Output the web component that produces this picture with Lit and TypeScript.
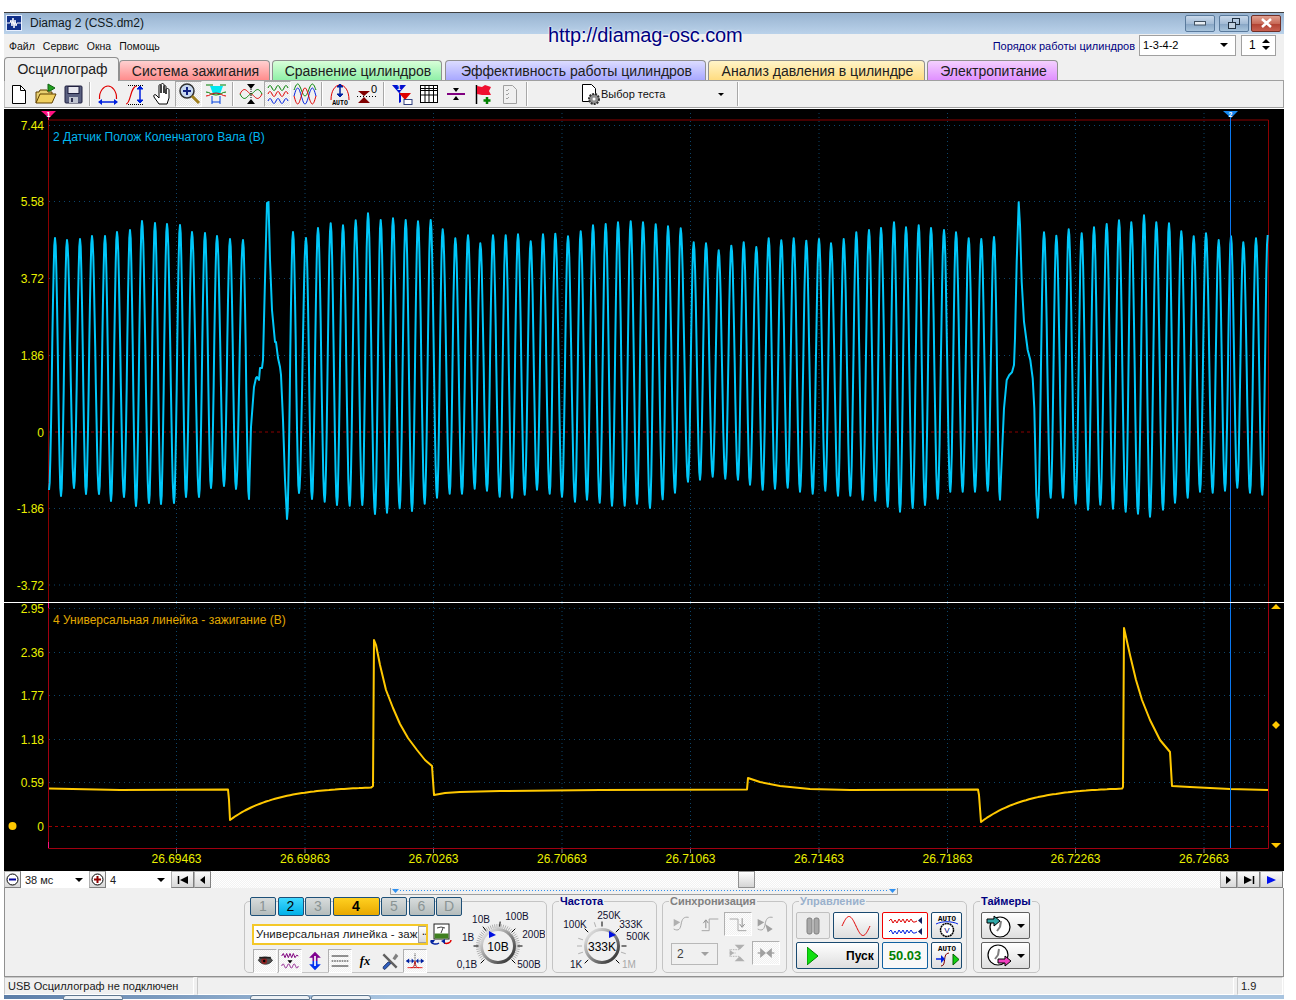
import { LitElement, html, css, svg } from "lit";
import { customElement } from "lit/decorators.js";

type P = [number, number];
const zip = (a: number[], b: number[]) => a.map((v, i) => [v, b[i]] as P);
const conv = (pts: P[], ox: number, oy: number) => pts.map(([x, y]) => [x / 3 + ox, y / 3 + oy] as P);
const alt = (t: P[], c: P[]) => { const o: P[] = []; for (let i = 0; i < Math.max(t.length, c.length); i++) { if (t[i]) o.push(t[i]); if (c[i]) o.push(c[i]); } return o; };

function smooth(pts: P[]): P[] {
  const out: P[] = [];
  for (let i = 0; i < pts.length - 1; i++) {
    const [x0, y0] = pts[i], [x1, y1] = pts[i + 1];
    const n = Math.max(2, Math.round((x1 - x0) * 1.5));
    for (let k = 0; k < n; k++) { const t = k / n; out.push([x0 + (x1 - x0) * t, y0 + (y1 - y0) * (1 - Math.cos(Math.PI * t)) / 2]); }
  }
  out.push(pts[pts.length - 1]);
  return out;
}

const partA: P[] = [[49,490],[55,238],[61,496],[67,240],[74,488],[80,239],[86,494],[92,236],[99,494],[105,236],[111,501],[117,232],[124,497],[130,230],[136,506],[142,221],[149,503],[155,223],[161,504],[167,224],[174,503],[180,225],[186,497],[192,232],[199,497],[205,233],[211,488],[217,236],[224,486],[230,239],[236,489],[243,240],[249,499]];
const spike1: P[] = [[251,427],[254,387],[256,378],[257,377],[259,380],[260,368],[262,368],[263,360],[264,320],[266,240],[267,203],[268.5,202],[270,260],[272,310],[275,342],[276,342],[278,358],[280,367],[281,375],[283,420],[285,480],[287,519]];
const partB: P[] = [[287,519],[293,232],[299,493],[306,238],[312,499],[318,228]];
const partC = conv(alt(
  zip([14,51,89,127,165,201,239,276,314,351,389,426,464,501,539,576,614,651,689,726,765,801,839,876,914,951,990,1028,1065,1104,1140,1178,1216,1254,1290,1328,1365,1403,1440],[920,930,932,930,957,953,940,948,926,908,896,896,881,887,905,908,899,884,896,905,920,914,923,932,932,926,939,913,893,860,854,845,851,854,869,884,881,878,890]),
  zip([32,69,107,144,182,219,257,294,332,368,406,444,481,519,557,594,632,669,706,744,782,819,857,894,932,969,1007,1044,1082,1121,1158,1196,1234,1271,1309,1346,1384,1421],[85,91,76,55,75,70,75,79,75,103,130,121,145,121,121,118,139,118,116,124,109,91,87,82,79,82,88,94,100,142,145,166,152,142,156,130,136,130])), 320, 195);
const partD = conv(alt(
  zip([19,57,93,131,169,207,243,282,318,356,393,432,468,506,544,582],[137,132,145,132,112,105,99,82,97,91,99,105,112,130,132,126]),
  zip([38,76,114,151,188,226,263,300,338,375,413,451,488,525,563,600],[896,887,902,902,914,917,935,950,939,930,911,890,890,890,887,914])), 800, 195);
const spike2 = conv([[612,640],[620,555],[628,540],[636,532],[642,510],[645,430],[650,200],[656,22],[660,90],[665,260],[672,380],[683,465],[691,495],[698,550],[703,640],[709,900],[713,968]], 800, 195);
const partE = conv(alt(
  zip([713,752,789,827,864,901,939,977,1014,1050,1089,1125,1163,1200,1238,1275,1312,1350,1387],[968,908,908,926,944,929,941,950,956,965,944,923,908,890,893,887,878,893,899]),
  zip([732,769,806,845,882,920,957,994,1032,1069,1107,1144,1181,1218,1256,1293,1330,1368,1403],[112,122,103,115,97,87,76,82,61,82,85,109,124,115,135,124,142,130,120])), 800, 195);

const toStr = (p: P[]) => p.map(([x, y]) => `${x.toFixed(1)},${y.toFixed(1)}`).join(" ");
const topTrace = toStr([...smooth(partA), ...spike1, ...smooth([...partB, ...partC, ...partD]), ...spike2, ...smooth(partE)]);

const decay = (x0: number, x1: number, yBase: number, yStart: number, k: number) => { const o: P[] = []; for (let x = x0; x <= x1; x += 3) o.push([x, yBase + (yStart - yBase) * Math.exp(-(x - x0) / k)]); return o; };
const botTrace = toStr([[49,788.5],[120,790],[228,789.5],[229,800],[230,820],...decay(230,372,786,820,46),[373,786],[374,640],[376,645],[380,665],[386,690],[393,708],[400,724],[408,738],[417,750],[425,760],[432,766],[434,795],[445,793],[460,792],[500,791],[600,790],[747,789.5],[748,778],[760,782],[780,786],[810,789],[850,790],[978,789.5],[979,795],[981,822],...decay(981,1122,787,822,46),[1123,787],[1124,628],[1130,655],[1136,680],[1142,700],[1150,720],[1160,740],[1170,752],[1172,786],[1190,787],[1230,789],[1268,790]]);

const vgrid = [176.5, 305, 433.5, 562, 690.5, 819, 947.5, 1075.5, 1204];
const timeLabels = ["26.69463","26.69863","26.70263","26.70663","26.71063","26.71463","26.71863","26.72263","26.72663"];
const topLevels: [string, number][] = [["7.44",125.5],["5.58",201.5],["3.72",278.5],["1.86",355.5],["-1.86",508.5],["-3.72",585]];
const botLevels: [string, number][] = [["2.95",608.5],["2.36",652.5],["1.77",695.5],["1.18",739.5],["0.59",782.5]];

const I = (inner: unknown, w = 24, h = 24) => html`<svg width=${w} height=${h} viewBox="0 0 24 24">${inner}</svg>`;
const R = "#e00000", B = "#0020e0", G = "#008000";
const sine = (x: number, y: number, w: number, a: number, n: number, c: string) => svg`<path d=${(() => { let d = `M${x} ${y}`; for (let i = 1; i <= 40; i++) d += `L${(x + w * i / 40).toFixed(1)} ${(y - a * Math.sin(i / 40 * n * Math.PI * 2)).toFixed(1)}`; return d; })()} fill="none" stroke=${c}/>`;
const arrowV = (x: number, y0: number, y1: number, c: string) => svg`<path d="M${x} ${y0}V${y1}" stroke=${c} stroke-width="1.5"/><path d="M${x - 3} ${y0 + 3}L${x} ${y0}l3 3zM${x - 3} ${y1 - 3}L${x} ${y1}l3 -3z" fill=${c} stroke=${c}/>`;

const icons = {
  newDoc: I(svg`<path d="M5.500 3.500h8l5 5v13h-13z" fill="#fff" stroke="#000"/><path d="M13.500 3.500v5h5" fill="none" stroke="#000"/>`),
  open: I(svg`<path d="M2 21V10h3l1-2h7l1 2h4v3" fill="#e8d070" stroke="#604000"/><path d="M2 21l4-9h16l-4 9z" fill="#f0d060" stroke="#604000"/><path d="M14 9V2l7 4-5 3z" fill="#20a020" stroke="#106010"/>`),
  save: I(svg`<rect x="4" y="4" width="17" height="17" rx="1" fill="#5a6080" stroke="#202040"/><rect x="7" y="4.500" width="11" height="7" fill="#e8e8f0" stroke="#202040"/><rect x="8" y="15" width="9" height="6" fill="#c0c4d0"/><rect x="10" y="16" width="2" height="4" fill="#303050"/>`),
  arch: I(svg`<path d="M3.500 17C3 9 8 4 12 4s9 5 8.500 13" fill="none" stroke=${R} stroke-width="1.200"/><path d="M3 20h18" stroke=${B} stroke-width="1.500"/><path d="M6 17l-4 3 4 3zM18 17l4 3-4 3z" fill=${B}/>`),
  scurve: I(svg`<path d="M3 22c5 0 4-18 11-18" fill="none" stroke=${R} stroke-width="1.200"/><path d="M5 3.500h15" stroke="#000" stroke-dasharray="1 1"/><path d="M5 22.500h15" stroke="#000" stroke-dasharray="1 1"/>${arrowV(17, 4, 21, B)}`),
  hand: I(svg`<path d="M9 22l-5-7c-1-2 1-3 2-2l3 3V4c0-2 2-2 2 0v7V3c0-2 3-2 3 0v8-6c0-2 2-2 2 0v7-4c0-2 3-2 3 0v8l-2 6z" fill="#fff" stroke="#000"/>`),
  zoom: I(svg`<circle cx="10" cy="9" r="7" fill="#c8d8f0" stroke="#303030" stroke-width="1.500"/><path d="M6 9h8M10 5v8" stroke="#102080" stroke-width="2"/><path d="M15 14l7 7" stroke="#a08020" stroke-width="3"/>`),
  hzoom: I(svg`<path d="M6 4h13l-3 8H9z" fill="#00e8f0"/><path d="M2 3h7M16 3h6M2 10c4 0 5 3 10 3s6-3 10-3" fill="none" stroke="#008000"/><path d="M2 14c4 0 5-3 10-3s6 3 10 3" fill="none" stroke=${R}/><path d="M8 14v8M16 14v8M8 20h8" stroke="#0040e0"/>`),
  cross: I(svg`<path d="M1 12c5-10 8 0 11 0s6 10 11 0" fill="none" stroke=${R}/><path d="M1 12c5 10 8 0 11 0s6-10 11 0" fill="none" stroke=${G}/><path d="M8 2h8l-4 5zM8 22h8l-4-5z" fill="#000"/><path d="M12 7v10" stroke="#000" stroke-dasharray="1 1"/>`),
  waves: I(svg`${sine(2,6,20,2.500,2.500,"#008000")}${sine(2,12,20,2.500,2.500,"#e00000")}${sine(2,19,20,2.500,2.500,"#0020e0")}`),
  overlap: I(svg`${sine(1,8,22,6,1.500,"#008000")}${sine(1,14,22,8,1.500,"#0020e0")}${sine(1,14,22,-8,1.500,"#e00000")}`),
  autoArch: I(svg`<path d="M3 18C3 9 7 3 12 3s9 6 9 15" fill="none" stroke=${R}/>${arrowV(12,2,15,"#0020a0")}<text x="12" y="23" text-anchor="middle" font-size="6.500" font-weight="700" font-family="Liberation Mono" fill="#000">AUTO</text>`),
  zeroIcon: I(svg`<path d="M3 9h12l-6 5zM3 21h12l-6-6z" fill="#800000"/><path d="M2 14.500h20" stroke="#000" stroke-dasharray="1 2"/><text x="19" y="11" text-anchor="middle" font-size="11" font-family="Liberation Sans" fill="#000">0</text>`),
  filter: I(svg`<path d="M2 3h14l-7 8z" fill="#0010d0"/><path d="M9 10v11l2-1v-9" fill="#0010d0"/><path d="M9 11h12l-6 7z" fill=${R}/><rect x="14" y="17.500" width="8" height="5" fill="#fff" stroke="#304080"/><text x="9" y="7.500" text-anchor="middle" font-size="7" font-weight="700" font-family="Liberation Sans" fill="#fff">1</text>`),
  table: I(svg`<rect x="3.500" y="3.500" width="17" height="17" fill="#fff" stroke="#000"/><path d="M3 6.500h18M3 8.500h18M3 13h18M8 4v16M12 4v16M16.500 4v16" stroke="#000" fill="none"/>`),
  divide: I(svg`<path d="M3 12h18" stroke="#800080" stroke-width="2"/><path d="M9 6h6l-3 4zM9 18h6l-3-4z" fill="#000"/>`),
  flag: I(svg`<path d="M5.500 3v19" stroke="#000" stroke-width="1.500"/><path d="M6 4l5 1 3-2 6 2-2 4 2 4H11l-5-1z" fill="#f01030"/><path d="M16 15v7M12.500 18.500h7" stroke="#008000" stroke-width="2.500"/>`),
  check: I(svg`<path d="M5.500 3.500h9l4 4v14h-13z" fill="#f0f0f0" stroke="#a0a0a0"/><path d="M8 8l1 1 2-2M8 12l1 1 2-2M8 16l1 1 2-2" stroke="#a0a0a0" fill="none"/>`),
  gearDoc: I(svg`<path d="M4.500 2.500h9l4 4v13h-13z" fill="#fff" stroke="#000"/><circle cx="16" cy="17" r="5" fill="#909090" stroke="#303030" stroke-dasharray="2 1" stroke-width="2"/><circle cx="16" cy="17" r="1.500" fill="#fff"/>`),
  eye: I(svg`<path d="M4 11c3-5 13-5 17 0-3 6-13 7-17 0z" fill="#505050" stroke="#303030"/><circle cx="11" cy="12" r="3.500" fill="#902020"/><circle cx="11" cy="12" r="1.500" fill="#000"/><path d="M5 8l14 0" stroke="#202020" stroke-width="2"/>`),
  purple: I(svg`<path d="M2 6l2-3 2 5 2-5 2 5 2-5 2 5 2-5 2 5 2-3 2 1" fill="none" stroke="#800080" stroke-width="1.200"/>${sine(2,18,20,2.500,3,"#800080")}<path d="M9 11h6l-3 4z" fill="#000"/>`),
  updown: I(svg`<path d="M12 1l7 7h-4v4H9V8H5z" fill="#800090"/><path d="M12 23l7-7h-4v-4H9v4H5z" fill="#0030f0"/><path d="M11 6h2v12h-2z" fill="#fff"/>`),
  lines: I(svg`<path d="M2 6h20M2 18h20" stroke="#000"/><path d="M2 12h20" stroke="#000" stroke-dasharray="2 1"/>`),
  tools: I(svg`<path d="M5 3l16 16-2 2L3 5z" fill="#606060"/><path d="M19 3l-4 6 3 2 4-5z" fill="#808080"/><path d="M10 13l-6 6c-1 3 2 4 3 2l6-6z" fill="#3060c0" stroke="#102050"/>`),
  peak: I(svg`<path d="M3 20h18" stroke=${R}/><path d="M7 20c3 0 4-1 5-8 1 7 2 8 5 8" fill="none" stroke=${R}/><path d="M12 3v17" stroke="#000" stroke-dasharray="1 1"/><path d="M2 12h7M15 12h7" stroke="#0020a0"/><path d="M5 9l-4 3 4 3zM19 9l4 3-4 3zM8 9l3 3-3 3zM16 9l-3 3 3 3z" fill="#0020a0"/>`),
  meter: I(svg`<rect x="5" y="2" width="15" height="15" fill="#fff" stroke="#202020"/><rect x="5.500" y="11.500" width="14" height="5" fill="#408020"/><path d="M8 6l4-1 4 1M12 11l2-5" stroke="#404040" fill="none"/><path d="M2 19c0 3 5 4 8 2" fill="none" stroke="#0020a0" stroke-width="1.500"/><path d="M22 18c0 3-4 4-7 3" fill="none" stroke="#e00000" stroke-width="1.500"/><path d="M1 18h5l-2 3zM12 19l4-2v5z" fill="#0020a0"/>`),
};
const grey = (inner: unknown) => I(svg`<g fill="none" stroke="#a8a8a8" stroke-width="1.200">${inner}</g>`);
const syncIcons = {
  a: grey(svg`<path d="M2 18c6 3 8 0 9-6s3-9 9-8"/><path d="M2 6l8 4-8 5z" fill="#b0b0b0" stroke="none"/>`),
  b: grey(svg`<path d="M2 20h9V6h11"/><path d="M7 17V8M4 11l3-4 3 4" stroke="#909090"/>`),
  c: grey(svg`<path d="M2 6h10v14h10"/><path d="M17 5v10M14 12l3 4 3-4" stroke="#909090"/>`),
  d: grey(svg`<path d="M2 18c6 3 8 0 9-6s3-9 9-8"/><path d="M2 6l8 4-8 5zM11 12l9 6-6 4z" fill="#a0a0a0" stroke="none"/>`),
  e: grey(svg`<path d="M2 8h12M2 12h8M2 16h12" stroke-dasharray="1 1"/><path d="M8 2h12l-6 6zM8 22h12l-6-6zM2 8l5 4-5 4z" fill="#b0b0b0" stroke="none"/>`),
  f: grey(svg`<path d="M2 12h8M14 12h8" stroke-width="2"/><path d="M5 6l7 6-7 6zM19 6l-7 6 7 6z" fill="#a0a0a0" stroke="none"/>`),
};

function knob(cx: number, cy: number, hatch: boolean, majors: number[], center: string, labels: [string, number, number, string?][], mark: P) {
  const r = 16.5;
  const ticks: unknown[] = [];
  if (hatch) for (let a = -135; a <= 135; a += 6) {
    const t = (a - 90) * Math.PI / 180;
    ticks.push(svg`<line x1=${cx + (r + 1.5) * Math.cos(t)} y1=${cy + (r + 1.5) * Math.sin(t)} x2=${cx + (r + 5.5) * Math.cos(t)} y2=${cy + (r + 5.5) * Math.sin(t)} stroke="#b0b0b0"/>`);
  }
  majors.forEach((m) => {
    const a = typeof m === "number" ? m : 0;
    const t = (a - 90) * Math.PI / 180;
    ticks.push(svg`<line x1=${cx + (r + 3) * Math.cos(t)} y1=${cy + (r + 3) * Math.sin(t)} x2=${cx + (r + 8) * Math.cos(t)} y2=${cy + (r + 8) * Math.sin(t)} stroke="#000"/>`);
  });
  return svg`${ticks}
    <circle cx=${cx} cy=${cy} r=${r} fill="#f0f0f0" stroke="url(#kg)" stroke-width="3"/>
    <text x=${cx} y=${cy + 4.500} text-anchor="middle" font-size="12" font-family="Liberation Sans" fill="#000">${center}</text>
    <path d="M${mark[0] - 3} ${mark[1] - 4}l7 4-7 3z" fill="#0010e0"/>
    ${labels.map(([t, x, y, c]) => svg`<text x=${x} y=${y + 3.500} text-anchor="middle" font-size="10" font-family="Liberation Sans" fill=${c || "#101030"}>${t}</text>`)}`;
}
const kgDefs = svg`<defs><linearGradient id="kg" x1="0" y1="0" x2="1" y2="1"><stop offset="0" stop-color="#f4f4f4"/><stop offset=".5" stop-color="#909090"/><stop offset="1" stop-color="#202020"/></linearGradient></defs>`;

const tabs = [
  { t: "Осциллограф", w: 115, c: "on" },
  { t: "Система зажигания", w: 151, c: "red" },
  { t: "Сравнение цилиндров", w: 170, c: "green" },
  { t: "Эффективность работы цилиндров", w: 261, c: "blue" },
  { t: "Анализ давления в цилиндре", w: 217, c: "yellow" },
  { t: "Электропитание", w: 131, c: "pink" },
];
const channels = [
  { t: "1", c: "" }, { t: "2", c: "cyan" }, { t: "3", c: "" }, { t: "4", c: "amber" }, { t: "5", c: "" }, { t: "6", c: "" }, { t: "D", c: "" },
];

@customElement("app-root")
export class AppRoot extends LitElement {
  static styles = css`
    :host { display: block; width: 1296px; height: 1000px; background: #fff; overflow: hidden; font-family: "Liberation Sans", Arial, sans-serif; font-size: 11px; color: #000; }
    svg { display: block; flex: none; }
    .win { position: relative; margin: 12px 12px 0 4px; width: 1280px; border-top: 1px solid #404040; background: #f0f0f0; }
    .title { height: 21px; background: linear-gradient(#98b3d0, #bad2ea); display: flex; align-items: center; padding: 0 2px 1px 2px; box-sizing: border-box; }
    .logo { width: 16px; height: 16px; margin-right: 8px; }
    .ttext { font-size: 12px; color: #101820; }
    .wbtns { margin-left: auto; display: flex; gap: 4px; }
    .wb { width: 30px; height: 17px; box-sizing: border-box; border: 1px solid #5a7a9c; border-radius: 2px; background: linear-gradient(#c8d8ea 0, #a4bcd6 50%, #86a4c4 51%, #a8c4dc 100%); display: flex; align-items: center; justify-content: center; }
    .wb.x { background: linear-gradient(#e0a090 0, #c86a58 50%, #b04030 51%, #c86050 100%); border-color: #703028; margin-left: -2px; margin-right: 1px; }
    .menu { height: 23px; display: flex; align-items: center; padding-left: 5px; font-size: 10.500px; color: #101010; box-sizing: border-box; }
    .menu .m { margin-right: 8px; }
    .url { position: absolute; left: 544px; top: 11px; font-size: 20px; color: #000080; text-shadow: 0 0 2px #fff, 0 0 2px #fff; letter-spacing: -0.1px; }
    .order { margin-left: auto; display: flex; align-items: center; color: #000080; font-size: 11px; }
    .sel { margin-left: 4px; width: 97px; height: 21px; box-sizing: border-box; border: 1px solid #a0a0a0; background: #fff; color: #000; display: flex; align-items: center; padding: 0 7px 2px 3px; font-size: 11px; justify-content: space-between; }
    .caret { width: 0; height: 0; border-left: 4px solid transparent; border-right: 4px solid transparent; border-top: 4px solid #000; flex: none; }
    .caret.g { border-top-color: #a0a0a0; }
    .spin { margin: 0 8px 0 5px; width: 35px; height: 21px; box-sizing: border-box; border: 1px solid #a0a0a0; background: #fff; color: #000; display: flex; align-items: center; justify-content: space-between; padding: 0 5px 2px 7px; font-size: 12px; }
    .updn { display: flex; flex-direction: column; gap: 3px; }
    .up { width: 0; height: 0; border-left: 4px solid transparent; border-right: 4px solid transparent; border-bottom: 4px solid #000; }
    .tabs { height: 23px; display: flex; align-items: flex-end; position: relative; z-index: 1; }
    .tab { flex: none; box-sizing: border-box; height: 20px; border: 1px solid #909090; border-bottom: none; border-radius: 4px 4px 0 0; font-size: 14px; color: #202020; text-align: center; line-height: 20px; white-space: nowrap; margin-right: 2px; padding-left: 2px; }
    .tab.on { height: 24px; margin-bottom: -1px; background: #f0f0f0; border-bottom: none; margin-right: 0; line-height: 22px; }
    .red { background: linear-gradient(#ffd0d0, #ff8c8c); margin-right: 2px; }
    .green { background: linear-gradient(#d8ffd8, #90f0a8); margin-right: 3px; }
    .blue { background: linear-gradient(#dcdcff, #a8a8ff); }
    .yellow { background: linear-gradient(#fff4c8, #ffdc80); }
    .pink { background: linear-gradient(#f4d0ff, #e090ff); }
    .toolbar { height: 28px; box-sizing: border-box; border: 1px solid #a0a0a0; border-left-color: #c0c0c0; display: flex; align-items: center; background: #f0f0f0; padding-left: 0; }
    .tb { width: 27px; height: 26px; box-sizing: border-box; flex: none; display: flex; align-items: center; justify-content: center; }
    .tb.p { background: repeating-conic-gradient(#f8f8f8 0 25%, #e8e8e8 0 50%) 0 0 / 2px 2px; border: 1px solid #d0d0d0; border-color: #a8a8a8 #fff #fff #a8a8a8; }
    .sep { width: 1px; height: 24px; background: #a8a8a8; border-right: 1px solid #fff; margin: 0 3px; flex: none; }
    .start { width: 0; flex: none; }
    .combo { width: 203px; display: flex; align-items: center; flex: none; font-size: 11px; color: #101010; }
    .combo .ci { margin: 0 0 0 47px; }
    .combo .ct { margin-left: -1px; }
    .combo .caret { margin-left: auto; margin-right: 10px; border-left-width: 3px; border-right-width: 3px; border-top-width: 3px; }
    .gap1 { height: 1px; background: #fff; }
    .scopes { background: #000; }
    .white { height: 1px; background: #fff; }
    .time { height: 17px; display: flex; background: #fff; font-size: 11px; }
    .tbtn { flex: none; box-sizing: border-box; height: 17px; border: 1px solid #b0b0b0; border-right-color: #808080; border-bottom-color: #808080; background: linear-gradient(#fafafa, #d8d8d8); display: flex; align-items: center; justify-content: center; }
    .w17 { width: 17px; } .w23 { width: 23px; }
    .tc { display: flex; align-items: center; justify-content: space-between; padding: 0 6px 0 4px; box-sizing: border-box; flex: none; color: #202020; }
    .tc .caret { border-left-width: 4px; border-right-width: 4px; }
    .track { flex: 1; background: repeating-conic-gradient(#f2f2f2 0 25%, #fff 0 50%) 0 0 / 2px 2px; display: flex; }
    .thumb { width: 17px; height: 17px; margin-left: 527px; box-sizing: border-box; border: 1px solid #909090; background: linear-gradient(#fff, #d4d4d4); }
    .panel { height: 89px; box-sizing: border-box; background: #f0f0f0; border-left: 1px solid #909090; border-right: 1px solid #909090; border-bottom: 1px solid #909090; }
    .ruler { margin-left: 385px; }
    .groups { display: flex; align-items: flex-start; padding-left: 239px; margin-top: 0; }
    fieldset { margin: 0; padding: 0; min-width: 0; box-sizing: border-box; height: 78px; border: 1px solid #c4c4c4; border-radius: 5px; flex: none; }
    legend { font-size: 11px; font-weight: 700; line-height: 13px; padding: 0 1px; margin-left: 6px; }
    .g1 { width: 303px; height: 72px; margin-top: 6px; border: 1px solid #c4c4c4; border-radius: 5px; box-sizing: border-box; display: flex; flex: none; margin-right: 5px; }
    .g1l { width: 210px; flex: none; }
    .chs { display: flex; gap: 1.500px; margin: -5px 0 0 5px; }
    .ch { width: 26px; height: 19px; box-sizing: border-box; border: 1px solid #1e5078; border-radius: 2px; background: linear-gradient(#d8dcdc, #b4bcbc); color: #8a9494; font-size: 14px; text-align: center; line-height: 17px; flex: none; }
    .ch.cyan { background: linear-gradient(#40d8ff, #00b0e8); color: #000; }
    .ch.amber { width: 47px; background: linear-gradient(#ffd020, #e8a800); color: #000; font-weight: 700; }
    .inrow { display: flex; align-items: center; margin: 6px 0 0 7px; }
    .inp { width: 176px; height: 21px; box-sizing: border-box; border: 2px solid #f4c828; background: #fff; display: flex; align-items: center; font-size: 11.500px; padding-left: 2px; justify-content: space-between; white-space: nowrap; overflow: hidden; letter-spacing: 0.1px; color: #202020; }
    .dots { width: 17px; height: 17px; flex: none; box-sizing: border-box; border: 1px solid #a0a0a0; background: linear-gradient(#fff, #d8d8d8); font-weight: 700; font-size: 9px; text-align: center; line-height: 11px; }
    .inrow svg { margin-left: 1px; }
    .irow { display: flex; margin: 3px 0 0 8px; gap: 1px; }
    .ib { width: 24px; height: 24px; box-sizing: border-box; display: flex; align-items: center; justify-content: center; flex: none; }
    .ib.p { background: repeating-conic-gradient(#fdfdfd 0 25%, #f0f0f0 0 50%) 0 0 / 2px 2px; border: 1px solid; border-color: #b0b0b0 #fff #fff #b0b0b0; }
    .ib svg { width: 20px; height: 20px; }
    .g2 { width: 105px; margin-right: 5px; } .g2 legend { color: #000080; }
    .g3 { width: 125px; margin-right: 5px; } .g3 legend { color: #808080; }
    .g4 { width: 175px; margin-right: 6px; } .g4 legend { color: #9ab0cc; }
    .g5 { width: 67px; } .g5 legend { color: #000080; margin-left: 6px; }
    .sgrid { display: grid; grid-template-columns: repeat(4, 28px); grid-auto-rows: 24px; row-gap: 5px; margin: 4px 0 0 5px; }
    .sgrid .ib { width: 28px; }
    .sc { grid-column: span 2; margin: 2px 6px 0 3px; height: 22px; box-sizing: border-box; border: 1px solid #b8b8b8; display: flex; align-items: center; justify-content: space-between; padding: 0 8px 0 5px; font-size: 12px; color: #404040; }
    .cgrid { display: grid; grid-template-columns: 34px 46px 46px 31px; grid-auto-rows: 27px; gap: 3px; margin: 4px 0 0 3px; }
    .cb { box-sizing: border-box; border: 1px solid #1a4a70; border-radius: 2px; background: linear-gradient(#fff, #dedede); display: flex; align-items: center; justify-content: center; }
    .cb.dis { border-color: #c0c0c0; background: #ececec; }
    .cb.redb { border-color: #f00000; background: #fff; }
    .cb.start { grid-column: span 2; width: auto; justify-content: flex-start; padding-left: 10px; font-weight: 700; font-size: 12px; }
    .cb.start span { margin-left: 18px; }
    .cb.num { color: #008000; font-weight: 700; font-size: 13px; background: #f8f8f8; border-color: #1060a0; }
    .tgrid { display: grid; grid-auto-rows: 27px; grid-template-columns: 49px; gap: 3px; margin: 4px 0 0 7px; }
    .tm { border-color: #606060; gap: 5px; }
    .status { height: 18px; display: flex; background: #f0f0f0; box-sizing: border-box; font-size: 11px; color: #202020; gap: 3px; }
    .sb { box-sizing: border-box; height: 18px; border: 1px solid #d0d0d0; border-color: #c8c8c8 #fff #fff #c8c8c8; display: flex; align-items: center; padding-left: 3px; flex: none; }
    .task { height: 4px; margin: 0 12px 0 4px; width: 1280px; background: linear-gradient(90deg, #5c7ea8, #a8c4e0 30%, #a8c4e0); display: flex; }
    .tk { width: 60px; height: 5px; background: #eef2f6; border-radius: 3px 3px 0 0; flex: none; border: 1px solid #607890; box-sizing: border-box; }
    .tk1 { margin-left: 59px; } .tk2 { margin-left: 127px; } .tk3 { margin-left: 1px; }
  `;

  private scopeCommon(y0: number, y1: number, levels: [string, number][]) {
    return svg`
      ${vgrid.map((x) => svg`<line x1=${x} x2=${x} y1=${y0} y2=${y1} stroke="#0c4468" stroke-dasharray="1 3"/>`)}
      ${levels.map(([, y]) => svg`<line x1="49" x2="1268" y1=${y} y2=${y} stroke="#0c4468" stroke-dasharray="1 4"/>`)}
      ${levels.map(([t, y]) => svg`<text x="44" y=${y + 4.500} text-anchor="end" font-size="12" font-family="Liberation Sans" fill="#eaf000">${t}</text>`)}
    `;
  }

  render() {
    const a = icons;
    return html`
      <div class="win">
        <div class="title">
          <svg class="logo" viewBox="0 0 16 16"><rect x=".5" y=".5" width="15" height="15" fill="#10308a" stroke="#e8f0ff"/><path d="M1 8h3l1-3 1 6 1-8 1 10 1-8 1 6 1-3h4" fill="none" stroke="#fff"/></svg>
          <span class="ttext">Diamag 2 (CSS.dm2)</span>
          <div class="wbtns">
            <div class="wb"><svg width="12" height="5"><rect x=".5" y=".5" width="11" height="3.500" fill="#e8eef4" stroke="#405060"/></svg></div>
            <div class="wb"><svg width="12" height="11"><rect x="4.500" y=".5" width="7" height="6" fill="none" stroke="#203040"/><rect x=".5" y="4.500" width="7" height="6" fill="#c0d0e0" stroke="#203040"/></svg></div>
            <div class="wb x"><svg width="13" height="10"><path d="M2 1l9 8M11 1l-9 8" stroke="#fff" stroke-width="2.500"/></svg></div>
          </div>
        </div>
        <div class="menu">
          <span class="m">Файл</span><span class="m">Сервис</span><span class="m">Окна</span><span class="m">Помощь</span>
          <div class="order">Порядок работы цилиндров
            <div class="sel">1-3-4-2<span class="caret"></span></div>
            <div class="spin">1<span class="updn"><span class="up"></span><span class="caret"></span></span></div>
          </div>
        </div>
        <div class="url">http://diamag-osc.com</div>
        <div class="tabs">${tabs.map((t) => html`<div class="tab ${t.c}" style="width:${t.w}px">${t.t}</div>`)}</div>
        <div class="toolbar">
          ${this.tbs([a.newDoc, a.open, a.save])}<div class="sep"></div>
          ${this.tbs([a.arch, a.scurve, a.hand])}
          <div class="tb p">${a.zoom}</div><div class="tb">${a.hzoom}</div><div class="sep"></div>
          <div class="tb">${a.cross}</div><div class="tb p">${a.waves}</div><div class="tb">${a.overlap}</div><div class="sep"></div>
          ${this.tbs([a.autoArch, a.zeroIcon])}<div class="sep"></div>
          ${this.tbs([a.filter, a.table, a.divide, a.flag, a.check])}<div class="sep"></div>
          <div class="combo"><span class="ci">${a.gearDoc}</span><span class="ct">Выбор теста</span><span class="caret"></span></div>
          <div class="sep"></div>
        </div>
        <div class="gap1"></div>
        <div class="scopes">
          <svg width="1280" height="493" viewBox="4 109 1280 493">
            ${this.scopeCommon(113, 602, topLevels)}
            <line x1="49" x2="1268" y1="432" y2="432" stroke="#8b0000" stroke-dasharray="3 3"/>
            <text x="44" y="436.500" text-anchor="end" font-size="12" font-family="Liberation Sans" fill="#eaf000">0</text>
            <path d="M48.500 120H1268.500V602M48.500 120V602" fill="none" stroke="#8b0000"/>
            <line x1="48.500" x2="48.500" y1="113" y2="120" stroke="#ff1080"/>
            <path d="M41 111h15l-7 7z" fill="#ff1080"/>
            <text x="48.500" y="117" text-anchor="middle" font-size="7" font-weight="700" font-family="Liberation Sans" fill="#fff">1</text>
            <polyline points=${topTrace} fill="none" stroke="#00c8fa" stroke-width="2" stroke-linejoin="round"/>
            <line x1="1230.500" x2="1230.500" y1="113" y2="602" stroke="#0a78f0"/>
            <path d="M1223 111h15l-7 7z" fill="#1888f0"/>
            <text x="1230.500" y="117" text-anchor="middle" font-size="7" font-weight="700" font-family="Liberation Sans" fill="#fff">2</text>
            <text x="53" y="141" font-size="12" font-family="Liberation Sans" fill="#00b8f0">2 Датчик Полож Коленчатого Вала (В)</text>
          </svg>
          <div class="white"></div>
          <svg width="1280" height="268" viewBox="4 603 1280 268">
            ${this.scopeCommon(603, 848, botLevels)}
            <line x1="49" x2="1268" y1="826.500" y2="826.500" stroke="#a00000" stroke-dasharray="3 3"/>
            <text x="44" y="831" text-anchor="end" font-size="12" font-family="Liberation Sans" fill="#eaf000">0</text>
            <path d="M48.500 603V848.500H1268.500V603" fill="none" stroke="#a00010"/>
            <path d="M48.500 603V608M48.500 842V848" stroke="#ff1080"/>
            <polyline points=${botTrace} fill="none" stroke="#ffc800" stroke-width="2" stroke-linejoin="round"/>
            <line x1="1230.500" x2="1230.500" y1="603" y2="848" stroke="#0a78f0"/>
            ${vgrid.map((x, i) => svg`<line x1=${x} x2=${x} y1="849" y2="853" stroke="#808080"/><text x=${x} y="863" text-anchor="middle" font-size="12" font-family="Liberation Sans" fill="#eaf000">${timeLabels[i]}</text>`)}
            <text x="53" y="624" font-size="12" font-family="Liberation Sans" fill="#e0a800">4 Универсальная линейка - зажигание (В)</text>
            <circle cx="12.500" cy="826" r="4" fill="#ffc800"/>
            <path d="M1271 609l5-5 5 5zM1276 721l4 4-4 4-4-4zM1271 843h10l-5 5z" fill="#ffc800"/>
          </svg>
        </div>
        <div class="time">
          <div class="tbtn w17"><svg width="13" height="13"><circle cx="6.500" cy="6.500" r="5.500" fill="#fff" stroke="#000"/><path d="M3 6.500h7" stroke="#0000a0" stroke-width="2"/></svg></div>
          <div class="tc" style="width:68px">38 мс<span class="caret"></span></div>
          <div class="tbtn w17"><svg width="13" height="13"><circle cx="6.500" cy="6.500" r="5.500" fill="#fff" stroke="#000"/><path d="M3 6.500h7M6.500 3v7" stroke="#900000" stroke-width="2"/></svg></div>
          <div class="tc" style="width:65px">4<span class="caret"></span></div>
          <div class="tbtn w23"><svg width="12" height="8"><path d="M1.500 0v8" stroke="#000" stroke-width="1.500"/><path d="M11 0v8L3 4z"/></svg></div>
          <div class="tbtn w17"><svg width="5" height="8"><path d="M5 0v8L0 4z"/></svg></div>
          <div class="track"><div class="thumb"></div></div>
          <div class="tbtn w17"><svg width="5" height="8"><path d="M0 0v8l5-4z"/></svg></div>
          <div class="tbtn w23"><svg width="12" height="8"><path d="M10.500 0v8" stroke="#000" stroke-width="1.500"/><path d="M1 0v8l8-4z"/></svg></div>
          <div class="tbtn w23"><svg width="9" height="8"><path d="M0 0v8l9-4z" fill="#0010f0"/></svg></div>
          <div style="width:1px"></div>
        </div>
        <div class="panel">
          <svg class="ruler" width="508" height="7" viewBox="0 0 508 7"><path d="M.5 0v6.500H507.500V0" fill="none" stroke="#a0a0a0"/><path d="M10 2.500H498" stroke="#3090f0" stroke-dasharray="1 2"/><path d="M2 1h7L5.500 5zM499 1h7l-3.500 4z" fill="#3090f0"/></svg>
          <div class="groups">
            <div class="g1">
              <div class="g1l">
                <div class="chs">${channels.map((c) => html`<div class="ch ${c.c}">${c.t}</div>`)}</div>
                <div class="inrow">
                  <div class="inp">Универсальная линейка - заж<span class="dots">...</span></div>
                  ${I(a.meter.values ? svg`${a.meter.values[2]}` : "")}
                </div>
                <div class="irow">
                  <div class="ib p">${a.eye}</div><div class="ib p">${a.purple}</div><div class="ib">${a.updown}</div><div class="ib p">${a.lines}</div>
                  <div class="ib"><svg viewBox="0 0 24 24"><text x="12" y="17" text-anchor="middle" font-size="15" font-style="italic" font-weight="700" font-family="Liberation Serif">fx</text></svg></div>
                  <div class="ib">${a.tools}</div><div class="ib p">${a.peak}</div>
                </div>
              </div>
              <svg width="90" height="70" viewBox="455 904 90 70">${kgDefs}${knob(498, 948, true, [-135,-90,-38,5,45,90,135].slice(0), "10В", [["10В",481,921],["100В",517,918],["200В",534,936],["500В",529,966],["0,1В",467,966],["1В",468,939]], [492,937])}</svg>
            </div>
            <fieldset class="g2"><legend>Частота</legend>
              <svg width="103" height="63" viewBox="553 910 103 63">${knob(602, 948, false, [-135,-45,0,45,90,135], "333K", [["250K",609,917],["333K",631,926],["500K",638,938],["1M",629,966,"#a8a8a8"],["100K",575,926],["1K",576,966]], [612,937])}
                ${[-108,-90,-72,-18,108].map((d) => { const t=(d-90)*Math.PI/180; return svg`<line x1=${602+20*Math.cos(t)} y1=${948+20*Math.sin(t)} x2=${602+25*Math.cos(t)} y2=${948+25*Math.sin(t)} stroke="#b0b0b0"/>`; })}
              </svg>
            </fieldset>
            <fieldset class="g3"><legend>Синхронизация</legend>
              <div class="sgrid">
                <div class="ib">${syncIcons.a}</div><div class="ib">${syncIcons.b}</div><div class="ib p">${syncIcons.c}</div><div class="ib">${syncIcons.d}</div>
                <div class="sc">2<span class="caret g"></span></div><div class="ib">${syncIcons.e}</div><div class="ib p">${syncIcons.f}</div>
              </div>
            </fieldset>
            <fieldset class="g4"><legend>Управление</legend>
              <div class="cgrid">
                <div class="cb dis"><svg width="14" height="18"><rect x="1" y="1" width="5" height="16" rx="2" fill="#a8a8a8" stroke="#808080"/><rect x="8" y="1" width="5" height="16" rx="2" fill="#a8a8a8" stroke="#808080"/></svg></div>
                <div class="cb"><svg width="30" height="22" viewBox="0 0 30 22">${sine(1,11,28,9.500,1,"#e00000")}</svg></div>
                <div class="cb redb"><svg width="34" height="22" viewBox="0 0 34 22">
                  <path d="M1 6l2-2 2 4 2-3 2 3 2-4 2 3 2-3 2 4 2-4 2 3 2-3 2 3 2 0 2-1" fill="none" stroke="#e00000"/><path d="M34 2v7l-4-3.500zM34 13v7l-4-3.500z" fill="#102060"/>
                  <path d="M1 17l2-2 2 4 2-3 2 3 2-4 2 3 2-3 2 4 2-4 2 3 2-3 2 3 2 0 2-1" fill="none" stroke="#0020e0"/></svg></div>
                <div class="cb"><svg width="26" height="24" viewBox="0 0 26 24"><text x="13" y="7" text-anchor="middle" font-size="7.500" font-weight="700" font-family="Liberation Mono" fill="#000">AUTO</text><path d="M2 10c6-3 16-3 22 0" fill="none" stroke="#0020e0"/><circle cx="13" cy="16" r="6.500" fill="#fff" stroke="#000" stroke-dasharray="2 .5" stroke-width="1.500"/><text x="13" y="19" text-anchor="middle" font-size="8" font-family="Liberation Sans" fill="#000080">V</text></svg></div>
                <div class="cb start"><svg width="11" height="18"><path d="M0 0l11 9L0 18z" fill="#10e010" stroke="#008000"/></svg><span style="margin-left:28px">Пуск</span></div>
                <div class="cb num">50.03</div>
                <div class="cb"><svg width="26" height="24" viewBox="0 0 26 24"><text x="13" y="7" text-anchor="middle" font-size="7.500" font-weight="700" font-family="Liberation Mono" fill="#000">AUTO</text><path d="M7 22c6 0 1-13 8-13" fill="none" stroke="#800000"/><path d="M2 15h8" stroke="#0020e0" stroke-width="1.500"/><path d="M7 11l4 4-4 4z" fill="#0020e0"/><path d="M19 10l6 5.500-6 5.500z" fill="#10d010" stroke="#006000"/></svg></div>
              </div>
            </fieldset>
            <fieldset class="g5"><legend>Таймеры</legend>
              <div class="tgrid">
                <div class="cb tm"><svg width="26" height="24" viewBox="0 0 26 24"><circle cx="14" cy="13" r="10" fill="#fff" stroke="#000" stroke-width="1.200"/><path d="M14 13l1-6M14 13l-3 4" stroke="#808080" stroke-width="2"/><path d="M1 5h7V2l6 5-6 5V9H1z" fill="#30a8a8" stroke="#000"/></svg><span class="caret"></span></div>
                <div class="cb tm"><svg width="26" height="24" viewBox="0 0 26 24"><circle cx="12" cy="11" r="10" fill="#fff" stroke="#000" stroke-width="1.200"/><path d="M12 11l1-6M12 11l-3 4" stroke="#808080" stroke-width="2"/><path d="M12 15h7v-3l6 5-6 5v-3h-7z" fill="#f040c0" stroke="#000"/></svg><span class="caret"></span></div>
              </div>
            </fieldset>
          </div>
        </div>
        <div class="status">
          <div class="sb" style="width:190px">USB Осциллограф не подключен</div>
          <div class="sb" style="width:1037px"></div>
          <div class="sb" style="width:46px">1.9</div>
        </div>
      </div>
      <div class="task"><div class="tk tk1"></div><div class="tk tk2"></div><div class="tk tk3"></div></div>
    `;
  }

  private tbs(items: unknown[]) {
    return items.map((i) => html`<div class="tb">${i}</div>`);
  }
}
